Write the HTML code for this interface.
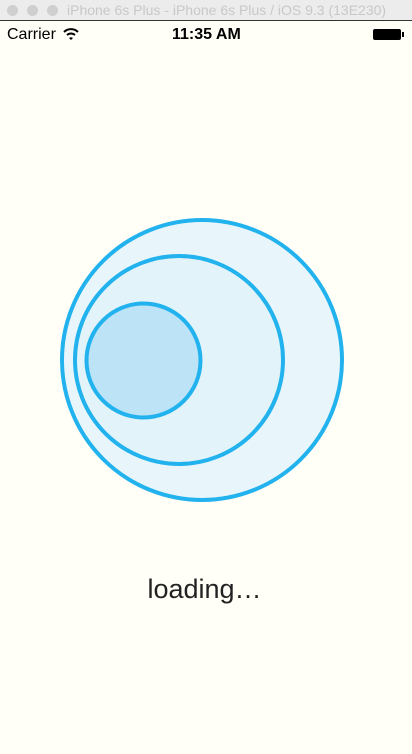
<!DOCTYPE html>
<html><head><meta charset="utf-8"><style>
body{margin:0;width:412px;height:754px;background:#fffff8;overflow:hidden;font-family:"Liberation Sans",sans-serif;position:relative}
.title{position:absolute;left:0;top:0;width:412px;height:20px;background:#ececec;border-bottom:1px solid #333;}
.dot{position:absolute;top:5px;width:11px;height:11px;border-radius:50%;background:#cfcfcf}
.tt{position:absolute;left:67px;top:2px;font-size:14px;color:#c8c8c8}
.sb{position:absolute;top:26px;font-size:16px;color:#000}
</style></head><body>
<div class="title">
<div class="dot" style="left:7px"></div><div class="dot" style="left:27px"></div><div class="dot" style="left:47px"></div>
<div class="tt">iPhone 6s Plus - iPhone 6s Plus / iOS 9.3 (13E230)</div>
</div>
<div class="sb" style="left:7px">Carrier</div>
<svg style="position:absolute;left:63px;top:27px" width="16" height="13" viewBox="0 0 16 13"><path d="M1 5 A10 10 0 0 1 15 5" stroke="#000" stroke-width="2" fill="none"/><path d="M4 8 A6 6 0 0 1 12 8" stroke="#000" stroke-width="2" fill="none"/><path d="M6 11 L8 13 L10 11 A3 3 0 0 0 6 11Z" fill="#000"/></svg>
<div class="sb" style="left:172px;font-weight:bold">11:35 AM</div>
<div style="position:absolute;left:373px;top:29px;width:28px;height:11px;background:#000;border-radius:2px"></div>
<div style="position:absolute;left:402px;top:32px;width:2px;height:5px;background:#000"></div>
<svg style="position:absolute;left:0;top:0" width="412" height="754">
<circle cx="202" cy="360" r="140" fill="#e8f6fb" stroke="#22b2ee" stroke-width="4"/>
<circle cx="179" cy="360" r="104" fill="#e2f4fa" stroke="#22b2ee" stroke-width="4"/>
<circle cx="143.5" cy="360.5" r="57" fill="#bde3f7" stroke="#22b2ee" stroke-width="4"/>
</svg>
<div style="position:absolute;left:0;width:409px;top:574px;text-align:center;font-size:27px;color:#222">loading…</div>
</body></html>
